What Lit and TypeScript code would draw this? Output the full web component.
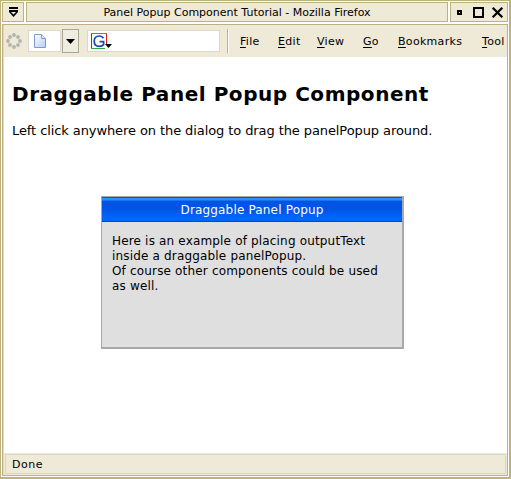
import { LitElement, html, css, svg } from "lit";
import { customElement } from "lit/decorators.js";
import { styleMap } from "lit/directives/style-map.js";

const MENUS = [
  { label: "File", width: 38 },
  { label: "Edit", width: 39 },
  { label: "View", width: 46 },
  { label: "Go", width: 35 },
  { label: "Bookmarks", width: 84 },
  { label: "Tool", width: 25 },
];
const DOTS = [[8, 2], [12, 4], [14, 8], [12, 12], [8, 14], [4, 12], [2, 8], [4, 4]];

@customElement("app-root")
export class AppRoot extends LitElement {
  static styles = css`
    :host {
      display: block;
      width: 511px;
      height: 479px;
      font-family: "DejaVu Sans", sans-serif;
      font-size: 11px;
      color: #000;
    }
    * { box-sizing: border-box; }
    svg { display: block; flex: none; }
    .window {
      width: 511px;
      height: 479px;
      border: 1px solid #bdb27e;
      border-right-width: 2px;
      border-bottom-width: 2px;
      background: #fffef8;
      padding: 1px;
      display: flex;
      flex-direction: column;
      gap: 2px;
      overflow: hidden;
    }
    .titlebar { display: flex; gap: 2px; height: 20px; flex: none; }
    .cell {
      border: 1px solid #bdb27e;
      background: #efe9d7;
      display: flex;
      align-items: center;
      justify-content: center;
    }
    .sys { width: 22px; }
    .title { width: 422px; }
    .title span { line-height: 13px; }
    .buttons { flex: 1; padding-right: 3px; }
    .frame {
      flex: 1;
      border: 1px solid #bdb27e;
      padding-left: 1px;
      display: flex;
      flex-direction: column;
      overflow: hidden;
      background: #e0d9ba;
    }
    .toolbar {
      height: 32px;
      flex: none;
      background: #efe9d7;
      display: flex;
      align-items: center;
      white-space: nowrap;
    }
    .throbber { margin-left: 2px; }
    .field {
      height: 22px;
      background: #fff;
      border: 1px solid #dcd8cc;
      display: flex;
      align-items: center;
      flex: none;
    }
    .url { width: 33px; margin-left: 6px; padding-left: 5px; }
    .drop {
      width: 17px;
      height: 24px;
      margin-left: 1px;
      border: 1px solid #aaa692;
      background: #efece2;
      display: flex;
      align-items: center;
      justify-content: center;
      flex: none;
    }
    .search { width: 133px; margin-left: 8px; padding-left: 3px; }
    .sep { width: 2px; height: 24px; margin: 0 11px 0 7px; background: #bdb27e; border-right: 1px solid #fff; flex: none; }
    .menu { display: flex; line-height: 14px; padding-top: 1px; letter-spacing: 0.3px; }
    .menu span { flex: none; }
    .menu u { text-underline-offset: 2px; text-decoration-thickness: 1px; text-decoration-skip-ink: none; }
    .page { flex: 1; padding: 25px 8px 0; background: #fff; }
    h1 { margin: 0; font-size: 20px; letter-spacing: 0.54px; line-height: 24px; white-space: nowrap; }
    p { margin: 17px 0 0; font-size: 13px; letter-spacing: -0.09px; line-height: 16px; white-space: nowrap; }
    .dialog {
      margin: 57px 0 0 89px;
      width: 303px;
      height: 153px;
      border: 1px solid #aba8a8;
      border-right-width: 2px;
      border-bottom-width: 2px;
      background: #dfdfdf;
      font-size: 12px;
      letter-spacing: 0.17px;
    }
    .caption {
      height: 25px;
      color: #fff;
      line-height: 26px;
      text-align: center;
      background: linear-gradient(#0855dd 0 1px, #2b90ff 1px 3px, #0055e5 4px, #0054e3 12px, #0066ff 21px, #0066ff 24px, #0048c8 24px);
    }
    .text { padding: 12px 10px; line-height: 15px; white-space: nowrap; }
    .status {
      height: 22px;
      flex: none;
      background: #efe9d7;
      padding: 1px;
      letter-spacing: 0.5px;
    }
    .status div {
      height: 20px;
      border: 1px solid #dad5c8;
      padding-left: 6px;
      line-height: 19px;
    }
  `;

  render() {
    return html`
      <div class="window">
        <div class="titlebar">
          <div class="cell sys">
            <svg width="11" height="10" viewBox="0 0 11 10">
              <path d="M1 0H10V2H1ZM1 3H10V5L5.5 10L1 5Z" />
              <path d="M3 5H8L5.5 7.6Z" fill="#efe9d7" />
            </svg>
          </div>
          <div class="cell title"><span>Panel Popup Component Tutorial - Mozilla Firefox</span></div>
          <div class="cell buttons">
            <svg width="52" height="16" viewBox="0 0 52 16">
              <path d="M5 6h5v5h-5zM7 8v1h1v-1z" fill-rule="evenodd" />
              <path d="M21 3h11v11h-11zM23 5v7h7v-7z" fill-rule="evenodd" />
              <path d="M40.7 3.7L50.3 13.3M50.3 3.7L40.7 13.3" stroke="#000" stroke-width="2.2" />
            </svg>
          </div>
        </div>
        <div class="frame">
          <div class="toolbar">
            <svg class="throbber" width="16" height="16" viewBox="0 0 16 16">
              ${DOTS.map(([x, y]) => svg`<circle cx=${x} cy=${y} r="1.9" fill="#b4b3b0" />`)}
            </svg>
            <div class="field url">
              <svg width="12" height="14" viewBox="0 0 12 14">
                <defs>
                  <linearGradient id="paper" x1="0" y1="0" x2="1" y2="1">
                    <stop offset="0" stop-color="#fff" /><stop offset="1" stop-color="#b5cdf6" />
                  </linearGradient>
                </defs>
                <path d="M.5 .5H7.5L11.5 4.5V13.5H.5Z" fill="url(#paper)" stroke="#7f96cf" />
                <path d="M7.5 .5V4.5H11.5" fill="#dce8fc" stroke="#7f96cf" />
              </svg>
            </div>
            <div class="drop">
              <svg width="9" height="5" viewBox="0 0 9 5"><path d="M0 0H9L4.5 5Z" /></svg>
            </div>
            <div class="field search">
              <svg width="21" height="16" viewBox="0 0 21 16">
                <path d="M.5 16V.5" stroke="#1b50bd" />
                <path d="M0 .5H16M0 15.5H14" stroke="#35a936" />
                <path d="M15.5 1V12" stroke="#e01b1b" />
                <path d="M12.5 5.2C11.5 3.6 10.2 3 8.4 3C5.3 3 3.2 5.1 3.2 8.2C3.2 11.4 5.3 13.3 8.3 13.3C10.2 13.3 11.8 12.6 12.6 11.6V8.6H8.5" fill="none" stroke="#1947ab" stroke-width="1.7" />
                <path d="M14 11H21L17.5 15Z" />
              </svg>
            </div>
            <div class="sep"></div>
            <div class="menu">
              ${MENUS.map(
                (m) => html`<span style=${styleMap({ width: `${m.width}px` })}><u>${m.label[0]}</u>${m.label.slice(1)}</span>`
              )}
            </div>
          </div>
          <div class="page">
            <h1>Draggable Panel Popup Component</h1>
            <p>Left click anywhere on the dialog to drag the panelPopup around.</p>
            <div class="dialog">
              <div class="caption">Draggable Panel Popup</div>
              <div class="text">
                Here is an example of placing outputText<br />inside a draggable panelPopup.<br />Of
                course other components could be used<br />as well.
              </div>
            </div>
          </div>
          <div class="status"><div>Done</div></div>
        </div>
      </div>
    `;
  }
}
